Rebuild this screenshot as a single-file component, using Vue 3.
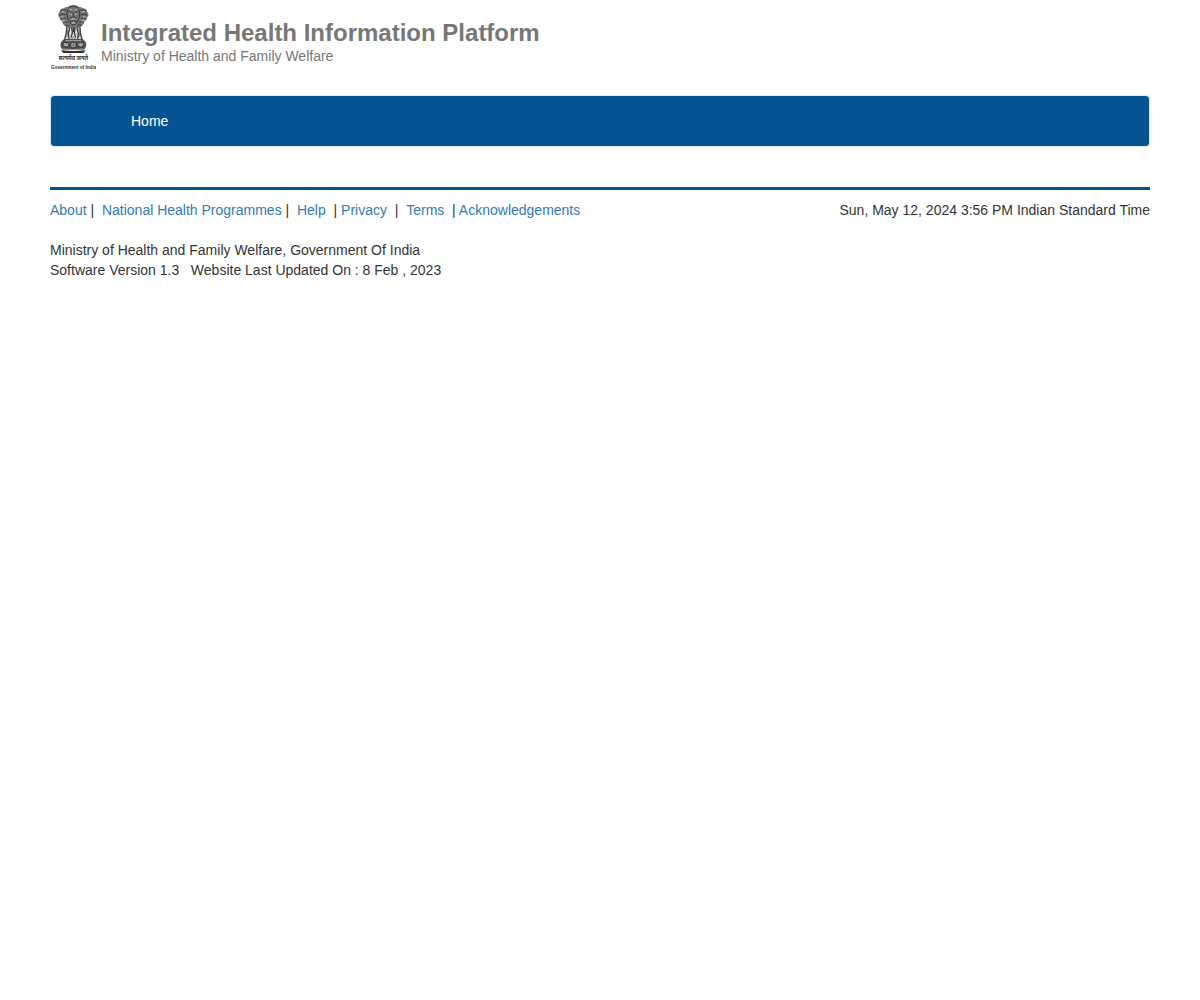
<script setup>
const nb = '\u00a0'
const links = [
  { label: 'About', sep: nb + '|' + nb + nb },
  { label: 'National Health Programmes', sep: nb + '|' + nb + nb },
  { label: 'Help', sep: nb + nb + '|' + nb },
  { label: 'Privacy', sep: nb + nb + '|' + nb + nb },
  { label: 'Terms', sep: nb + nb + '| ' },
  { label: 'Acknowledgements', sep: '' },
]
</script>

<template>
  <div class="page">
    <header class="brand">
      <svg class="emblem" viewBox="12 0 138 222" role="img" aria-label="Government of India emblem">
        <!-- manes and heads -->
        <path fill="#777" d="M66 21 Q70 15 82 15 Q94 15 98 21 Q104 19 110 25 Q122 25 123 35 Q131 42 125 50 Q123 60 115 64 Q114 76 104 80 L102 88 H62 L60 80 Q50 76 49 64 Q41 60 39 50 Q33 42 41 35 Q42 25 54 25 Q60 19 66 21Z" />
        <g fill="none" stroke="#333" stroke-width="3">
          <path d="M67 24 Q82 13 97 24 M66 28 Q59 42 65 55 Q70 72 82 75 Q94 72 99 55 Q105 42 98 28" />
          <path d="M42 36 Q50 27 60 30 M40 47 Q47 39 58 44 M44 57 Q51 49 59 56 M51 68 Q57 61 65 68 M58 77 Q65 71 71 79" />
          <path d="M122 36 Q114 27 104 30 M124 47 Q117 39 106 44 M120 57 Q113 49 105 56 M113 68 Q107 61 99 68 M106 77 Q99 71 93 79" />
          <path d="M70 34 L77 37 M94 34 L87 37 M82 37 V47 M72 54 Q82 46 92 54 M72 65 Q82 58 92 65" />
        </g>
        <g fill="none" stroke="#c8c8c8" stroke-width="3">
          <path d="M47 34 L55 36 M45 51 L53 51 M50 62 L58 62 M117 34 L109 36 M119 51 L111 51 M114 62 L106 62" />
          <path d="M71 28 L77 30 M93 28 L87 30 M73 42 L77 44 M91 42 L87 44 M76 57 H88 M77 69 H87" />
        </g>
        <!-- legs -->
        <path fill="#dedede" d="M61 84 H103 L110 118 H54Z" />
        <g fill="none" stroke="#3b3b3b" stroke-width="4">
          <path d="M62 82 L61 100 L56 117 M71 84 L67 100 L69 118 M77 83 L79 98 L75 113 M87 83 L85 98 L89 113 M93 84 L97 100 L95 118 M102 82 L103 100 L108 117" />
          <path d="M82 82 V96" />
        </g>
        <path fill="none" stroke="#777" stroke-width="3" d="M66 86 L62 112 M98 86 L102 112 M77 117 L82 110 L87 117" />
        <!-- abacus with the wheel -->
        <path fill="#505050" d="M54 117 H110 Q120 124 121 134 Q120 145 113 150 H51 Q44 145 43 134 Q44 124 54 117Z" />
        <g fill="#bdbdbd" stroke="#303030" stroke-width="3">
          <circle cx="82" cy="135" r="9" />
          <ellipse cx="60" cy="134" rx="9" ry="7" />
          <ellipse cx="104" cy="134" rx="9" ry="7" />
        </g>
        <path fill="none" stroke="#444" stroke-width="2" d="M73 135 H91 M82 126 V144 M54 137 L60 131 L66 137 M98 137 L104 131 L110 137" />
        <path fill="none" stroke="#d5d5d5" stroke-width="2" d="M58 122 H106 M50 147 Q82 151 114 147" />
        <path fill="#303030" d="M45 151 Q82 155 119 151 L112 159 H52Z" />
        <text class="motto" x="82" y="180" text-anchor="middle">सत्यमेव जयते</text>
        <text class="owner" x="83" y="207" text-anchor="middle">Government of India</text>
      </svg>
      <div class="titles">
        <h1>Integrated Health Information Platform</h1>
        <p>Ministry of Health and Family Welfare</p>
      </div>
    </header>

    <nav class="navbar">
      <a href="#">Home</a>
    </nav>

    <footer>
      <div class="row">
        <div>
          <template v-for="l in links" :key="l.label"><a href="#">{{ l.label }}</a>{{ l.sep }}</template>
        </div>
        <div>Sun, May 12, 2024 3:56 PM Indian Standard Time</div>
      </div>
      <p>
        Ministry of Health and Family Welfare, Government Of India<br>
        Software Version 1.3&nbsp;&nbsp; Website Last Updated On : 8 Feb , 2023
      </p>
    </footer>
  </div>
</template>

<style>
body {
  margin: 0;
  background: #fff;
}
</style>

<style scoped>
.page {
  padding: 0 50px;
  font: 14px/20px "Liberation Sans", Arial, sans-serif;
  color: #333;
}
a {
  color: #337ab7;
  text-decoration: none;
}
.brand {
  display: flex;
  gap: 5px;
  color: #777;
}
.emblem {
  width: 46px;
  height: 74px;
}
.motto {
  font: bold 17px "Noto Sans", sans-serif;
  fill: #333;
}
.owner {
  font: bold 14px "Liberation Sans", Arial, sans-serif;
  fill: #333;
}
.titles {
  padding-top: 20px;
}
h1 {
  margin: 0;
  font-size: 24px;
  line-height: 26px;
}
.titles p {
  margin: 0;
}
.navbar {
  display: flex;
  margin-top: 21px;
  padding: 15px 80px;
  background: #065391;
  border: 1px solid #e0e7ed;
  border-radius: 4px;
}
.navbar a {
  color: #fff;
}
footer {
  margin-top: 40px;
  padding-top: 10px;
  border-top: 3px solid #065391;
}
.row {
  display: flex;
  flex-wrap: wrap;
  justify-content: space-between;
}
footer p {
  margin: 20px 0 0;
}
</style>
